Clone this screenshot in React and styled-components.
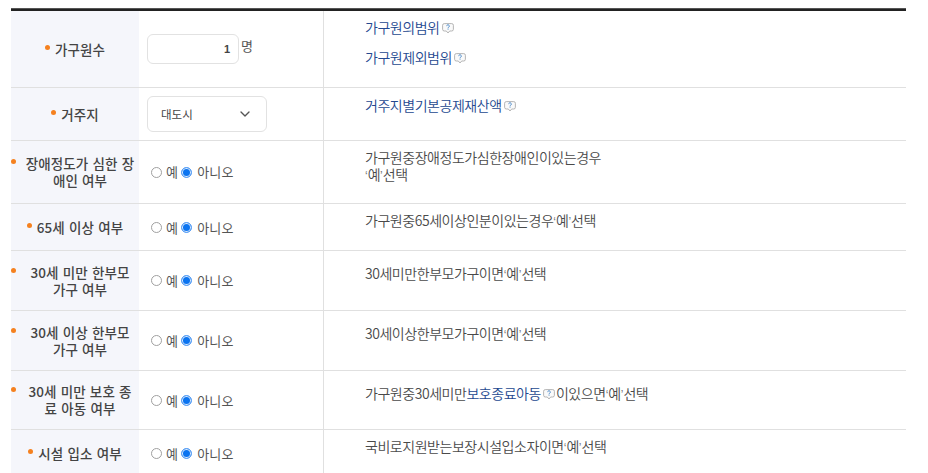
import React from "react";
import styled, { createGlobalStyle } from "styled-components";
import { ChevronDown } from "lucide-react";

const Global = createGlobalStyle`
  html, body { margin: 0; padding: 0; background: #fff; overflow: hidden; }
  body { font-family: "Noto Sans CJK KR", "Noto Sans", sans-serif; color: #444; }
`;

const Table = styled.div`
  width: 895px;
  height: 473px;
  margin-left: 11px;
  padding-top: 8px;
  box-sizing: border-box;
  overflow: hidden;
`;

const TopRule = styled.div`
  height: 3px;
  background: linear-gradient(#555 0 1px, #222 1px);
`;

const Row = styled.div`
  display: grid;
  grid-template-columns: 128px 185px 1fr;
  height: ${(p) => p.$h}px;
  border-bottom: 1px solid #e0e0e0;
`;

const Head = styled.div`
  background: #f5f6fb;
  display: flex;
  align-items: center;
  justify-content: center;
`;

const HeadLine = styled.div`
  display: flex;
  align-items: flex-start;
  justify-content: center;
  gap: 5px;
  width: ${(p) => (p.$two ? "100%" : "auto")};
`;

const HeadText = styled.div`
  flex: ${(p) => (p.$two ? "1" : "none")};
  font-size: 13.5px;
  font-weight: 500;
  line-height: 17px;
  color: #444;
  letter-spacing: 0.1px;
  word-spacing: 1px;
  text-align: center;
  white-space: nowrap;
`;

const Dot = styled.i`
  flex: none;
  width: 5px;
  height: 5px;
  margin-top: 4px;
  border-radius: 50%;
  background: #f5811f;
`;

const Control = styled.div`
  display: flex;
  align-items: ${(p) => (p.$top ? "flex-start" : "center")};
  padding: ${(p) => (p.$top ? "23px 0 0 8px" : `${p.$dy || 0}px 0 0 8px`)};
  border-right: 1px solid #e0e0e0;
`;

const NumberBox = styled.div`
  width: 92px;
  height: 30px;
  border: 1px solid #e2e2e2;
  border-radius: 6px;
  box-sizing: border-box;
  font-family: "Liberation Sans", sans-serif;
  font-size: 11px;
  font-weight: 700;
  color: #444;
  text-align: right;
  line-height: 29px;
  padding-right: 8px;
`;

const Unit = styled.span`
  font-size: 13px;
  line-height: 18px;
  margin: 3px 0 0 2px;
  color: #555;
`;

const Select = styled.div`
  width: 120px;
  height: 36px;
  border: 1px solid #e2e2e2;
  border-radius: 6px;
  box-sizing: border-box;
  display: flex;
  align-items: center;
  justify-content: space-between;
  padding: 0 13px;
  font-size: 11.5px;
  color: #444;
`;

const Radios = styled.div`
  display: flex;
  align-items: center;
  margin-left: 4px;
  font-size: 13px;
  color: #555;
`;

const Radio = styled.span`
  width: 11px;
  height: 11px;
  border-radius: 50%;
  box-sizing: border-box;
  margin-right: ${(p) => (p.$on ? 5 : 4)}px;
  border: ${(p) => (p.$on ? "1px solid #5ba0f5" : "1px solid #a0a0a0")};
  background: ${(p) => (p.$on ? "#0b74f0" : "#fff")};
  box-shadow: ${(p) => (p.$on ? "inset 0 0 0 1px #dcebfd" : "none")};
`;

const RadioLabel = styled.span`
  margin-right: 3px;
  line-height: 18px;
  letter-spacing: 0.2px;
`;

const Desc = styled.div`
  padding: ${(p) => p.$pt}px 0 0 41px;
  font-size: 14px;
  font-weight: 350;
  line-height: 17px;
  letter-spacing: -0.46px;
  color: #4a4a4a;
`;

const DescLine = styled.div`
  margin-bottom: ${(p) => p.$mb || 0}px;
  white-space: nowrap;
`;

const Link = styled.span`
  color: #24488f;
`;

const Quote = styled.span`
  font-family: "Liberation Sans", sans-serif;
  font-size: 12px;
  letter-spacing: 0;
  color: #777;
`;

const Choice = () => (
  <>
    <Quote>‘</Quote>예<Quote>’</Quote>선택
  </>
);

const Tip = () => (
  <svg width="12" height="11" viewBox="0 0 12 11" style={{ margin: "0 1px 0 2px", verticalAlign: "-1px" }}>
    <path d="M2.3 .6h7.4a1.7 1.7 0 0 1 1.7 1.7v4a1.7 1.7 0 0 1-1.7 1.7H7.7L6 10 4.3 8h-2A1.7 1.7 0 0 1 .6 6.3v-4A1.7 1.7 0 0 1 2.3 .6z" fill="#fafafa" stroke="#adadad" strokeWidth=".9" />
    <path d="M4.7 3.1a1.3 1.3 0 1 1 2 1.1c-.5.3-.7.5-.7 1" fill="none" stroke="#3a7fc4" strokeWidth=".9" />
    <rect x="5.6" y="5.7" width=".9" height=".9" fill="#3a7fc4" />
  </svg>
);

const YesNo = () => (
  <Radios>
    <Radio />
    <RadioLabel>예</RadioLabel>
    <Radio $on />
    <RadioLabel>아니오</RadioLabel>
  </Radios>
);

const rows = [
  { h: 76, label: "가구원수", control: "number", pt: 8,
    lines: [<DescLine $mb={13} key="a"><Link>가구원의범위</Link><Tip /></DescLine>, <DescLine key="b"><Link>가구원제외범위</Link><Tip /></DescLine>] },
  { h: 52, label: "거주지", control: "select", pt: 9,
    lines: [<DescLine key="a"><Link>거주지별기본공제재산액</Link><Tip /></DescLine>] },
  { h: 62, two: true, label: <>장애정도가 심한 장<br />애인 여부</>, pt: 8,
    lines: [<DescLine key="a">가구원중장애정도가심한장애인이있는경우</DescLine>, <DescLine key="b"><Choice /></DescLine>] },
  { h: 46, dy: 1, label: "65세 이상 여부", pt: 8,
    lines: [<DescLine key="a">가구원중65세이상인분이있는경우<Choice /></DescLine>] },
  { h: 59, two: true, label: <>30세 미만 한부모<br />가구 여부</>, pt: 14,
    lines: [<DescLine key="a">30세미만한부모가구이면<Choice /></DescLine>] },
  { h: 59, two: true, label: <>30세 이상 한부모<br />가구 여부</>, pt: 14,
    lines: [<DescLine key="a">30세이상한부모가구이면<Choice /></DescLine>] },
  { h: 58, dy: 1, two: true, label: <>30세 미만 보호 종<br />료 아동 여부</>, pt: 14,
    lines: [<DescLine key="a">가구원중30세미만<Link>보호종료아동</Link><Tip />이있으면<Choice /></DescLine>] },
  { h: 47, label: "시설 입소 여부", pt: 8,
    lines: [<DescLine key="a">국비로지원받는보장시설입소자이면<Choice /></DescLine>] },
];

export default function App() {
  return (
    <>
      <Global />
      <Table>
        <TopRule />
        {rows.map((r, i) => (
          <Row $h={r.h} key={i}>
            <Head>
              <HeadLine $two={r.two}>
                <Dot />
                <HeadText $two={r.two}>{r.label}</HeadText>
              </HeadLine>
            </Head>
            <Control $top={r.control === "number"} $dy={r.dy}>
              {r.control === "number" && (
                <>
                  <NumberBox>1</NumberBox>
                  <Unit>명</Unit>
                </>
              )}
              {r.control === "select" && (
                <Select>
                  대도시
                  <ChevronDown size={16} color="#555" strokeWidth={2} />
                </Select>
              )}
              {!r.control && <YesNo />}
            </Control>
            <Desc $pt={r.pt}>{r.lines}</Desc>
          </Row>
        ))}
      </Table>
    </>
  );
}
